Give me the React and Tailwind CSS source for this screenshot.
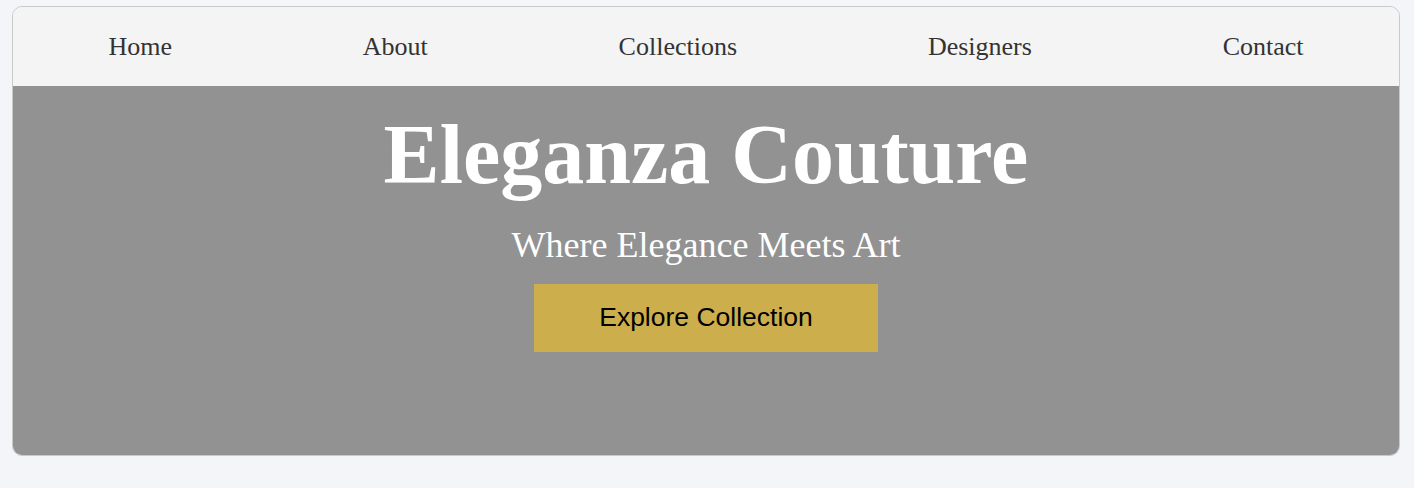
import React from 'react';

const links = ['Home', 'About', 'Collections', 'Designers', 'Contact'];

const App = () => {
    return (
        <div className="min-h-screen bg-[#f4f5f9] pt-[6px] pl-[12px]">
            <div className="w-[1388px] rounded-[10px] border border-[#c9c9cc] overflow-hidden">
                <nav className="h-[79px] bg-[#f4f4f4] flex items-center justify-around">
                    {links.map((l) => (
                        <a key={l} href="#" className="text-[26px] leading-[29px] text-[#333] font-['Liberation_Serif',serif]">
                            {l}
                        </a>
                    ))}
                </nav>
                <section className="h-[369px] bg-[#929292] flex flex-col items-center pt-[22px] font-['Liberation_Serif',serif] text-white">
                    <h1 className="text-[84px] leading-[93px] font-bold">Eleganza Couture</h1>
                    <p className="mt-[24px] text-[36px] leading-[40px]">Where Elegance Meets Art</p>
                    <button className="mt-[19px] w-[344px] h-[68px] bg-[#cdae4d] text-black text-[26.5px] font-['Liberation_Sans',sans-serif]">
                        Explore Collection
                    </button>
                </section>
            </div>
        </div>
    );
};

export default App;
